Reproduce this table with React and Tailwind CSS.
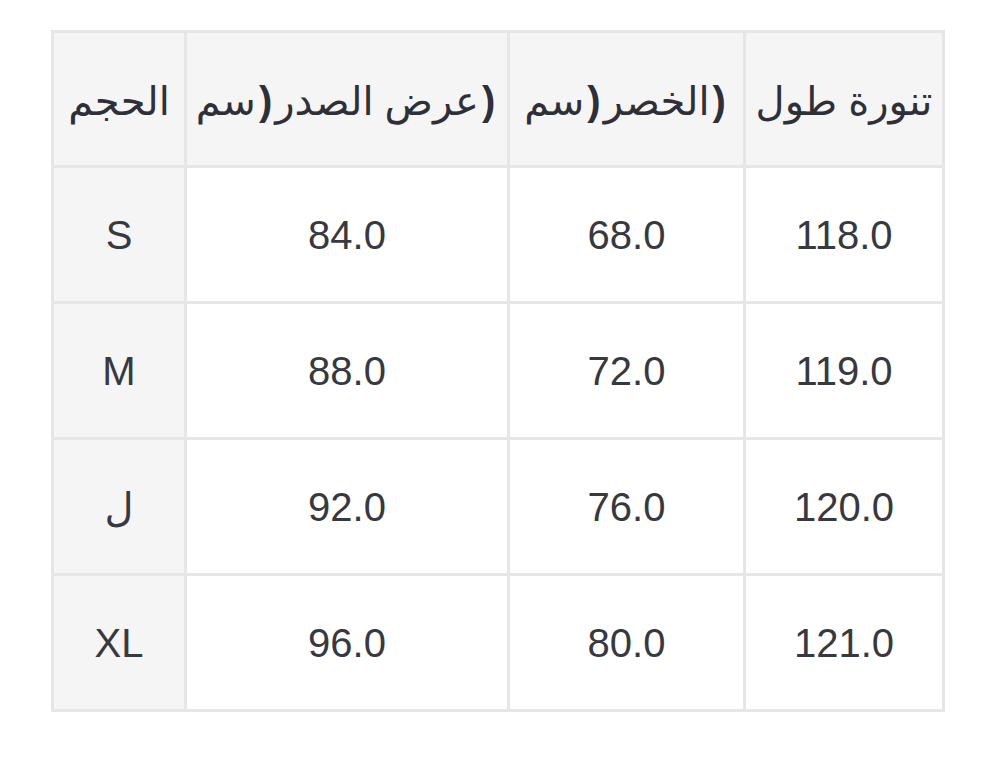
const headers = [
  ["الحجم"],
  ["سم", ")", "عرض الصدر", ")"],
  ["سم", ")", "الخصر", ")"],
  ["تنورة طول"],
];

const rows = [
  ["S", "84.0", "68.0", "118.0"],
  ["M", "88.0", "72.0", "119.0"],
  ["ل", "92.0", "76.0", "120.0"],
  ["XL", "96.0", "80.0", "121.0"],
];

const Cell = ({ children, shaded }) => (
  <div
    className={
      "flex items-center justify-center text-[40px] leading-none text-[#38383f] " +
      (shaded ? "bg-[#f5f5f5]" : "bg-white")
    }
  >
    {children}
  </div>
);

export default function App() {
  return (
    <div
      className="min-h-[758px] bg-white pt-[30px] pl-[51px]"
      style={{ fontFamily: '"Liberation Sans", "DejaVu Sans", sans-serif' }}
    >
      <div className="grid w-[894px] grid-cols-[130px_320px_233px_196px] grid-rows-[132px_133px_133px_133px_133px] gap-[3px] bg-[#e6e6e6] p-[3px]">
        {headers.map((parts, i) => (
          <Cell key={i} shaded>
            <div className="flex items-center pt-[4px] text-[#2f2f37]" dir="ltr">
              {parts.map((p, j) => (
                <span key={j} dir="ltr" className={j % 2 === 1 ? "mx-[3px] font-semibold" : ""}>
                  {p}
                </span>
              ))}
            </div>
          </Cell>
        ))}
        {rows.map((row, r) =>
          row.map((v, c) => (
            <Cell key={r + "-" + c} shaded={c === 0}>
              {v}
            </Cell>
          ))
        )}
      </div>
    </div>
  );
}
